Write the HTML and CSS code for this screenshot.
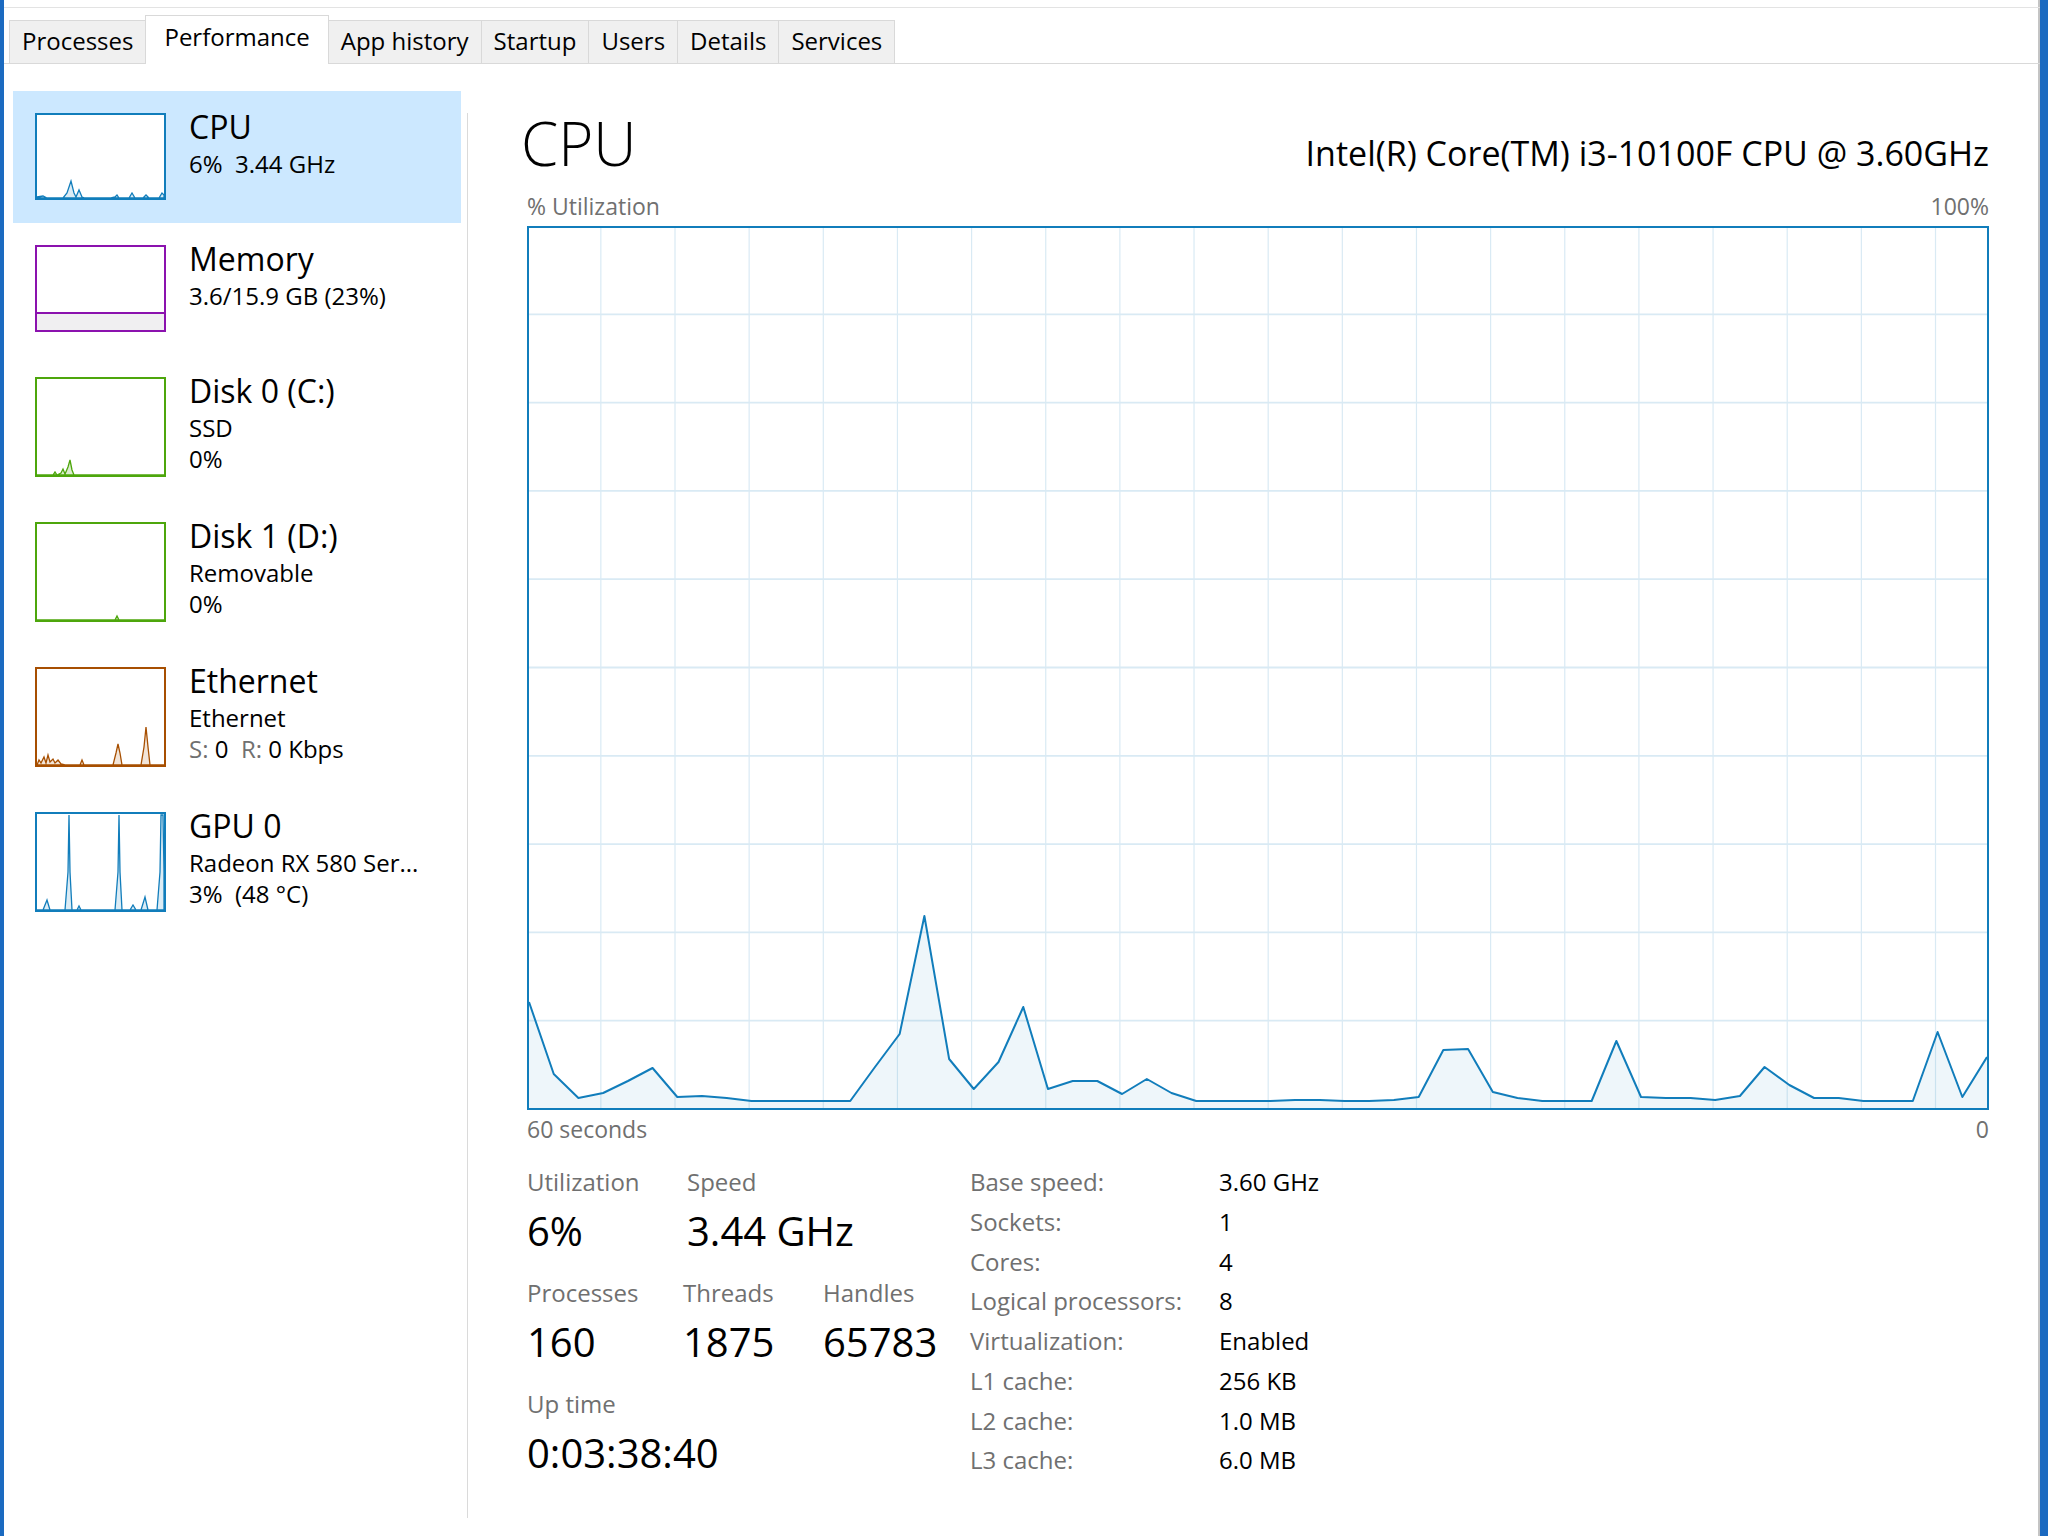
FILE: index.html
```html
<!DOCTYPE html>
<html lang="en">
	<head>
		<meta charset="UTF-8" />
		<title>Task Manager - Performance</title>
		<link rel="stylesheet" href="styles.css">
	</head>
	<body>
		<div class="window">
			<div class="menubar"></div>

			<nav class="tabs">
				<div class="tab">Processes</div>
				<div class="tab active">Performance</div>
				<div class="tab">App history</div>
				<div class="tab">Startup</div>
				<div class="tab">Users</div>
				<div class="tab">Details</div>
				<div class="tab">Services</div>
			</nav>

			<div class="content">
				<aside class="sidebar">
					<div class="item selected">
						<svg class="thumb" viewBox="0 0 131 87">
							<rect x="1" y="1" width="129" height="85" fill="#fff" stroke="#117dbb" stroke-width="2" />
							<polygon fill="#117dbb" fill-opacity=".15" stroke="#117dbb" stroke-width="1.3"
								points="2,84 8,83 12,85 28,85 32,80 36,68 39,80 41,84 44,77 47,84 50,85 76,85 80,84 82,82 84,85 94,85 97,80 100,85 108,85 111,82 114,85 124,85 127,80 129,82 129,85 2,85" />
						</svg>
						<div class="item-text">
							<div class="item-title">CPU</div>
							<div class="item-sub">6%&nbsp; 3.44 GHz</div>
						</div>
					</div>

					<div class="item">
						<svg class="thumb" viewBox="0 0 131 87">
							<rect x="1" y="1" width="129" height="85" fill="#fff" stroke="#8b12ae" stroke-width="2" />
							<rect x="2" y="68" width="127" height="17" fill="#f0eff1" />
							<line x1="2" y1="68" x2="129" y2="68" stroke="#8b12ae" stroke-width="2" />
						</svg>
						<div class="item-text">
							<div class="item-title">Memory</div>
							<div class="item-sub">3.6/15.9 GB (23%)</div>
						</div>
					</div>

					<div class="item">
						<svg class="thumb tall" viewBox="0 0 131 100">
							<rect x="1" y="1" width="129" height="98" fill="#fff" stroke="#4da60c" stroke-width="2" />
							<polygon fill="#4da60c" fill-opacity=".2" stroke="#4da60c" stroke-width="1.3"
								points="2,98 18,98 20,95 22,98 26,96 28,92 30,97 33,90 35,83 37,93 39,98 129,98" />
						</svg>
						<div class="item-text">
							<div class="item-title">Disk 0 (C:)</div>
							<div class="item-sub">SSD<br>0%</div>
						</div>
					</div>

					<div class="item">
						<svg class="thumb tall" viewBox="0 0 131 100">
							<rect x="1" y="1" width="129" height="98" fill="#fff" stroke="#4da60c" stroke-width="2" />
							<polygon fill="#4da60c" fill-opacity=".2" stroke="#4da60c" stroke-width="1.3"
								points="2,98 80,98 82,94 84,98 129,98" />
						</svg>
						<div class="item-text">
							<div class="item-title">Disk 1 (D:)</div>
							<div class="item-sub">Removable<br>0%</div>
						</div>
					</div>

					<div class="item">
						<svg class="thumb tall" viewBox="0 0 131 100">
							<rect x="1" y="1" width="129" height="98" fill="#fff" stroke="#a74f01" stroke-width="2" />
							<polygon fill="#a74f01" fill-opacity=".15" stroke="#a74f01" stroke-width="1.3"
								points="2,98 4,93 6,96 9,90 11,96 13,88 15,95 18,92 20,96 23,93 26,97 30,98 45,98 47,93 49,98 78,98 81,86 83,77 85,86 87,98 106,98 109,80 111,60 113,80 115,98 129,98" />
						</svg>
						<div class="item-text">
							<div class="item-title">Ethernet</div>
							<div class="item-sub">Ethernet<br><span class="dim">S:</span>&nbsp;0&nbsp; <span class="dim">R:</span>&nbsp;0 Kbps</div>
						</div>
					</div>

					<div class="item">
						<svg class="thumb tall" viewBox="0 0 131 100">
							<rect x="1" y="1" width="129" height="98" fill="#fff" stroke="#117dbb" stroke-width="2" />
							<polygon fill="#117dbb" fill-opacity=".15" stroke="#117dbb" stroke-width="1.3"
								points="2,98 8,98 12,88 15,98 30,98 33,60 34,3 35,60 37,98 42,98 44,94 46,98 80,98 83,60 84,3 85,60 87,98 95,98 98,93 101,98 106,98 110,85 113,98 122,98 125,60 126,3 128,3 129,60 129,98" />
						</svg>
						<div class="item-text">
							<div class="item-title">GPU 0</div>
							<div class="item-sub">Radeon RX 580 Ser...<br>3%&nbsp; (48 °C)</div>
						</div>
					</div>
				</aside>

				<main class="detail">
					<div class="detail-head">
						<h1 class="detail-title">CPU</h1>
						<div class="model">Intel(R) Core(TM) i3-10100F CPU @ 3.60GHz</div>
					</div>

					<div class="axis"><span>% Utilization</span><span>100%</span></div>

					<div class="graph">
						<svg viewBox="0 0 1461 880" preserveAspectRatio="none">
							<g stroke="#d9eaf4" stroke-width="1.2">
								<line x1="72" y1="0" x2="72" y2="880" />
								<line x1="146.3" y1="0" x2="146.3" y2="880" />
								<line x1="220.6" y1="0" x2="220.6" y2="880" />
								<line x1="294.9" y1="0" x2="294.9" y2="880" />
								<line x1="369.2" y1="0" x2="369.2" y2="880" />
								<line x1="443.5" y1="0" x2="443.5" y2="880" />
								<line x1="517.8" y1="0" x2="517.8" y2="880" />
								<line x1="592.1" y1="0" x2="592.1" y2="880" />
								<line x1="666.4" y1="0" x2="666.4" y2="880" />
								<line x1="740.7" y1="0" x2="740.7" y2="880" />
								<line x1="815" y1="0" x2="815" y2="880" />
								<line x1="889.3" y1="0" x2="889.3" y2="880" />
								<line x1="963.6" y1="0" x2="963.6" y2="880" />
								<line x1="1037.9" y1="0" x2="1037.9" y2="880" />
								<line x1="1112.2" y1="0" x2="1112.2" y2="880" />
								<line x1="1186.5" y1="0" x2="1186.5" y2="880" />
								<line x1="1260.8" y1="0" x2="1260.8" y2="880" />
								<line x1="1335.1" y1="0" x2="1335.1" y2="880" />
								<line x1="1409.4" y1="0" x2="1409.4" y2="880" />
							</g>
							<g stroke="#d9eaf4" stroke-width="1.8">
								<line x1="0" y1="86.3" x2="1461" y2="86.3" />
								<line x1="0" y1="174.6" x2="1461" y2="174.6" />
								<line x1="0" y1="262.9" x2="1461" y2="262.9" />
								<line x1="0" y1="351.2" x2="1461" y2="351.2" />
								<line x1="0" y1="439.5" x2="1461" y2="439.5" />
								<line x1="0" y1="527.8" x2="1461" y2="527.8" />
								<line x1="0" y1="616.1" x2="1461" y2="616.1" />
								<line x1="0" y1="704.4" x2="1461" y2="704.4" />
								<line x1="0" y1="792.7" x2="1461" y2="792.7" />
							</g>
							<!-- last 60 seconds, one sample per second -->
							<polygon fill="#117dbb" fill-opacity=".07" stroke="none"
								points="0,774 24.8,846 49.5,870 74.3,865 99.1,853 123.8,840 148.6,869 173.3,868 198.1,870 222.9,873 247.6,873 272.4,873 297.2,873 321.9,873 346.7,839 371.4,806 396.2,688 421,831 445.7,861 470.5,834 495.3,779 520,861 544.8,853 569.5,853 594.3,866 619.1,851 643.8,865 668.6,873 693.4,873 718.1,873 742.9,873 767.6,872 792.4,872 817.2,873 841.9,873 866.7,872 891.5,869 916.2,822 941,821 965.8,864 990.5,870 1015.3,873 1040,873 1064.8,873 1089.6,813 1114.3,869 1139.1,870 1163.9,870 1188.6,872 1213.4,868 1238.1,839 1262.9,857 1287.7,870 1312.4,870 1337.2,873 1362,873 1386.7,873 1411.5,804 1436.3,869 1461,829 1461,880 0,880" />
							<polyline fill="none" stroke="#117dbb" stroke-width="2" stroke-linejoin="round"
								points="0,774 24.8,846 49.5,870 74.3,865 99.1,853 123.8,840 148.6,869 173.3,868 198.1,870 222.9,873 247.6,873 272.4,873 297.2,873 321.9,873 346.7,839 371.4,806 396.2,688 421,831 445.7,861 470.5,834 495.3,779 520,861 544.8,853 569.5,853 594.3,866 619.1,851 643.8,865 668.6,873 693.4,873 718.1,873 742.9,873 767.6,872 792.4,872 817.2,873 841.9,873 866.7,872 891.5,869 916.2,822 941,821 965.8,864 990.5,870 1015.3,873 1040,873 1064.8,873 1089.6,813 1114.3,869 1139.1,870 1163.9,870 1188.6,872 1213.4,868 1238.1,839 1262.9,857 1287.7,870 1312.4,870 1337.2,873 1362,873 1386.7,873 1411.5,804 1436.3,869 1461,829" />
						</svg>
					</div>

					<div class="axis under"><span>60 seconds</span><span>0</span></div>

					<div class="stats">
						<div class="dyn">
							<div class="stat">
								<div class="stat-label">Utilization</div>
								<div class="stat-value">6%</div>
							</div>
							<div class="stat speed">
								<div class="stat-label">Speed</div>
								<div class="stat-value">3.44 GHz</div>
							</div>
							<div class="stat">
								<div class="stat-label">Processes</div>
								<div class="stat-value">160</div>
							</div>
							<div class="stat">
								<div class="stat-label">Threads</div>
								<div class="stat-value">1875</div>
							</div>
							<div class="stat">
								<div class="stat-label">Handles</div>
								<div class="stat-value">65783</div>
							</div>
							<div class="stat wide">
								<div class="stat-label">Up time</div>
								<div class="stat-value">0:03:38:40</div>
							</div>
						</div>

						<table class="spec">
							<tr><th>Base speed:</th><td>3.60 GHz</td></tr>
							<tr><th>Sockets:</th><td>1</td></tr>
							<tr><th>Cores:</th><td>4</td></tr>
							<tr><th>Logical processors:</th><td>8</td></tr>
							<tr><th>Virtualization:</th><td>Enabled</td></tr>
							<tr><th>L1 cache:</th><td>256 KB</td></tr>
							<tr><th>L2 cache:</th><td>1.0 MB</td></tr>
							<tr><th>L3 cache:</th><td>6.0 MB</td></tr>
						</table>
					</div>
				</main>
			</div>
		</div>
	</body>
</html>
```

FILE: styles.css
```css
* {
	box-sizing: border-box;
	margin: 0;
	padding: 0;
}

body {
	font-family: "Open Sans", "Noto Sans", sans-serif;
	background-color: #fff;
	color: #000;
}

.window {
	height: 1536px;
	display: flex;
	flex-direction: column;
	border-left: 4px solid #1b6ac0;
	border-right: 8px solid #1b6ac0;
	box-shadow: inset -2px 0 0 #c4c4c4;
	overflow: hidden;
}

.menubar {
	height: 8px;
	border-bottom: 1px solid #e3e3e3;
}

.tabs {
	height: 56px;
	display: flex;
	align-items: flex-end;
	padding: 7px 0 0 6px;
	border-bottom: 1px solid #d9d9d9;
}

.tab {
	height: 43px;
	padding: 0 12px;
	margin-left: -1px;
	font-size: 24px;
	line-height: 40px;
	background-color: #f0f0f0;
	border: 1px solid #d9d9d9;
	border-bottom: none;
	white-space: nowrap;
}

.tab.active {
	height: 49px;
	margin-bottom: -1px;
	padding: 1px 18px 0;
	background-color: #fff;
	position: relative;
}

.content {
	flex: 1;
	display: flex;
	min-height: 0;
	padding: 27px 0 18px;
}

.sidebar {
	width: 463px;
	flex-shrink: 0;
	padding-left: 9px;
}

.item {
	width: 448px;
	display: flex;
	gap: 23px;
	padding: 22px 0 23px 22px;
}

.item.selected {
	background-color: #cce8ff;
}

.thumb {
	display: block;
	flex-shrink: 0;
	width: 131px;
	height: 87px;
}

.thumb.tall {
	height: 100px;
}

.item-title {
	font-size: 32px;
	line-height: 28px;
	white-space: nowrap;
}

.item-sub {
	margin-top: 7px;
	font-size: 24px;
	line-height: 31px;
	white-space: nowrap;
}

.dim {
	color: #707070;
}

.detail {
	flex: 1;
	margin-top: 22px;
	border-left: 1px solid #dadada;
	padding: 0 51px 0 59px;
}

.detail-head {
	display: flex;
	justify-content: space-between;
	align-items: baseline;
}

.detail-title {
	margin-left: -6px;
	font-size: 60px;
	font-weight: 300;
	line-height: 60px;
}

.model {
	font-size: 34px;
	white-space: nowrap;
}

.axis {
	display: flex;
	justify-content: space-between;
	margin: 15px 0 5px;
	font-size: 23px;
	line-height: 30px;
	color: #707070;
}

.axis.under {
	margin: 4px 0 0;
}

.graph {
	height: 884px;
	border: 2px solid #117dbb;
}

.graph svg {
	display: block;
	width: 100%;
	height: 100%;
}

.stats {
	display: flex;
	margin-top: 18px;
}

.dyn {
	width: 443px;
	flex-shrink: 0;
	padding-top: 4px;
	display: grid;
	grid-template-columns: 156px 140px 1fr;
	row-gap: 19px;
	align-content: start;
}

.stat.speed {
	grid-column: span 2;
	padding-left: 4px;
}

.stat.wide {
	grid-column: span 3;
}

.stat-label {
	font-size: 24px;
	line-height: 32px;
	color: #707070;
}

.stat-value {
	margin-top: 6px;
	font-size: 40px;
	line-height: 54px;
	white-space: nowrap;
}

.spec {
	border-collapse: collapse;
	font-size: 24px;
	line-height: 39.3px;
}

.spec th {
	width: 249px;
	padding: 0;
	text-align: left;
	font-weight: normal;
	color: #707070;
	white-space: nowrap;
}

.spec td {
	padding: 0;
	white-space: nowrap;
}
```
